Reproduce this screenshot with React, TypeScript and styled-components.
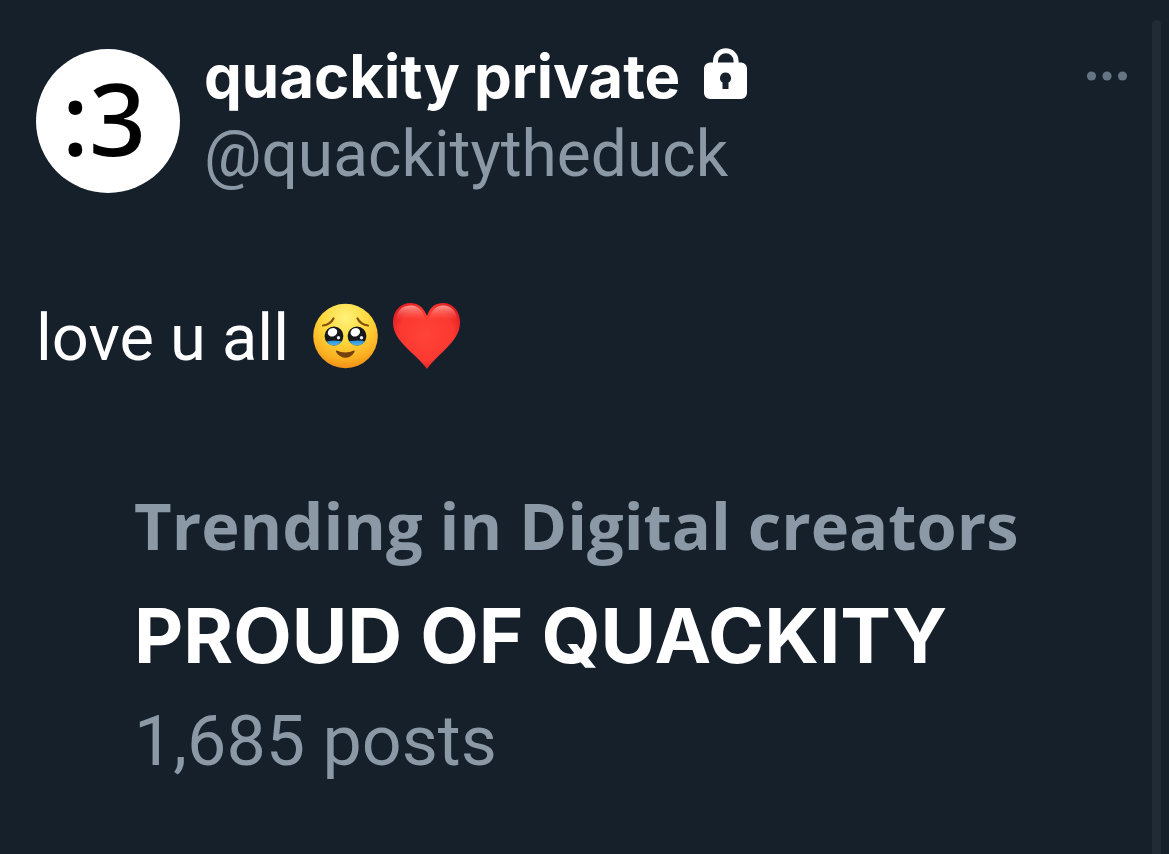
import React from "react";
import styled, { createGlobalStyle } from "styled-components";

const GlobalStyle = createGlobalStyle`
  *, *::before, *::after { box-sizing: border-box; }
  html, body { margin: 0; background: #16202a; }
`;

const Page = styled.main`
  display: flex;
  min-height: 100vh;
  background: #16202a;
  color: #ffffff;
  font-family: Roboto, "Liberation Sans", sans-serif;
`;

const Post = styled.article`
  flex: 1;
  min-width: 0;
  padding: 37px 23px 40px 36px;
`;

const ScrollGutter = styled.aside`
  display: flex;
  width: 17px;
  padding: 20px 8px 0 0;
`;

const ScrollThumb = styled.div`
  flex: 1;
  border-radius: 5px 5px 0 0;
  background: #212b35;
`;

const Header = styled.header`
  display: flex;
  align-items: flex-start;
  gap: 24px;
`;

const Avatar = styled.div`
  flex: none;
  width: 144px;
  height: 144px;
  margin-top: 12px;
  padding-right: 8px;
  border-radius: 50%;
  background: #ffffff;
  color: #000000;
  font: 500 100px/136px "Noto Sans", "Open Sans", sans-serif;
  text-align: center;
`;

const Author = styled.div`
  flex: 1;
  min-width: 0;
`;

const NameRow = styled.div`
  display: flex;
  align-items: center;
  gap: 24px;
`;

const Name = styled.h1`
  margin: 0;
  font: 700 60px/78px Inter, sans-serif;
  white-space: nowrap;
`;

const LockIcon = styled.svg`
  flex: none;
  width: 44px;
  height: 52px;
  margin-bottom: 4px;
`;

const Handle = styled.a`
  display: block;
  color: #8b98a5;
  font-size: 64px;
  line-height: 80px;
  text-decoration: none;
  white-space: nowrap;
`;

const MoreButton = styled.button`
  display: flex;
  align-items: center;
  height: 78px;
  padding: 0;
  border: 0;
  background: none;
  color: #657482;
  cursor: pointer;
`;

const Message = styled.div`
  display: flex;
  align-items: flex-start;
  margin-top: 101px;
`;

const MessageText = styled.p`
  margin: 0 24px 0 0;
  font-size: 65px;
  line-height: 84px;
`;

const Emojis = styled.div`
  display: flex;
  gap: 14px;
  padding-top: 7px;
`;

const Trend = styled.section`
  padding: 90px 0 0 98px;
`;

const TrendTopic = styled.p`
  margin: 0;
  color: #8b98a5;
  font: 700 65px/110px "Open Sans", "Noto Sans", sans-serif;
`;

const TrendTitle = styled.h2`
  margin: 0;
  font: 700 76px/110px Inter, sans-serif;
`;

const TrendCount = styled.p`
  margin: 0;
  color: #8b98a5;
  font-size: 70px;
  line-height: 102px;
`;

function Lock() {
  return (
    <LockIcon viewBox="0 0 44 52" role="img" aria-label="Protected account">
      <path d="M11.5 18v-5a10.300 10.300 0 0 1 20.600 0v5" fill="none" stroke="#fff" strokeWidth="5" />
      <path
        fill="#fff"
        fillRule="evenodd"
        d="M6 14.500h31a6 6 0 0 1 6 6V45a6 6 0 0 1-6 6H6a6 6 0 0 1-6-6V20.500a6 6 0 0 1 6-6zM21.500 24.500a5.500 5.500 0 0 0-3 10.100V41h6v-6.400a5.500 5.500 0 0 0-3-10.100z"
      />
    </LockIcon>
  );
}

function TearyFace() {
  return (
    <svg width="66" height="66" viewBox="0 0 66 66" role="img" aria-label="Face holding back tears">
      <defs>
        <radialGradient id="skin" cx="50%" cy="22%" r="80%">
          <stop offset="0" stopColor="#fff27a" />
          <stop offset=".45" stopColor="#ffd83c" />
          <stop offset=".8" stopColor="#fbb021" />
          <stop offset="1" stopColor="#ee8b16" />
        </radialGradient>
        <linearGradient id="tears" x1="0" y1="0" x2="0" y2="1">
          <stop offset="0" stopColor="#2a91d8" />
          <stop offset="1" stopColor="#6ccdf5" />
        </linearGradient>
        <clipPath id="eyes">
          <circle cx="21" cy="33" r="9.400" />
          <circle cx="44" cy="33" r="9.400" />
        </clipPath>
      </defs>
      <circle cx="32.500" cy="33" r="32.300" fill="url(#skin)" />
      <g clipPath="url(#eyes)">
        <path d="M10 22h46v22H10z" fill="#15171b" />
        <path d="M10 39.500q11-4 22.500 0q11.500-4 23.500 0v6H10z" fill="url(#tears)" />
      </g>
      <ellipse cx="19.500" cy="29.300" rx="4.900" ry="4.100" fill="#fff" transform="rotate(-25 19.500 29.300)" />
      <ellipse cx="42.300" cy="29.300" rx="4.900" ry="4.100" fill="#fff" transform="rotate(-25 42.300 29.300)" />
      <circle cx="25.500" cy="34.800" r="1.700" fill="#e4eef5" />
      <circle cx="48.500" cy="34.800" r="1.700" fill="#e4eef5" />
      <g fill="none" stroke="#87500c" strokeWidth="2.200" strokeLinecap="round">
        <path d="M10 22.500Q17.500 21.500 20.500 15.500" />
        <path d="M44.500 15.500Q47.500 21.500 55 22.500" />
      </g>
      <path d="M23.500 47.500Q32.500 51.500 41 47.500Q42 47.300 41.500 49Q38 54.800 32.500 54.800T23 49Q22.600 47.300 23.500 47.500z" fill="#754009" />
    </svg>
  );
}

function Heart() {
  return (
    <svg width="68" height="66" viewBox="0 0 68 66" role="img" aria-label="Red heart">
      <defs>
        <radialGradient id="heart" cx="50%" cy="48%" r="62%">
          <stop offset="0" stopColor="#ff4438" />
          <stop offset=".65" stopColor="#fb3831" />
          <stop offset="1" stopColor="#d9151e" />
        </radialGradient>
        <linearGradient id="shine" x1="0" y1="0" x2="0" y2="1">
          <stop offset="0" stopColor="#ffb0a8" stopOpacity=".85" />
          <stop offset="1" stopColor="#ff5147" stopOpacity="0" />
        </linearGradient>
      </defs>
      <path d="M34 13C30 3 24 0 17.500 0C7 0 0 8 0 19.500C0 39 23 50 34 66C45 50 67 39 67 19.500C67 8 60 0 50 0C43 0 37.500 3 34 13z" fill="url(#heart)" />
      <path d="M33 17C29 6 24 2.500 18 2.500C9 2.500 3 8 3 18Q16 12 33 17zM35 17C39 6 44 2.500 50 2.500C58 2.500 64 8 64 18Q51 12 35 17z" fill="url(#shine)" />
    </svg>
  );
}

export default function App() {
  return (
    <>
      <GlobalStyle />
      <Page>
        <Post>
          <Header>
            <Avatar>:3</Avatar>
            <Author>
              <NameRow>
                <Name>quackity private</Name>
                <Lock />
              </NameRow>
              <Handle href="#profile">@quackitytheduck</Handle>
            </Author>
            <MoreButton type="button" aria-label="More">
              <svg width="44" height="12" viewBox="0 0 44 12" fill="currentColor">
                <circle cx="6.500" cy="6" r="4.600" />
                <circle cx="22" cy="6" r="4.600" />
                <circle cx="37.500" cy="6" r="4.600" />
              </svg>
            </MoreButton>
          </Header>
          <Message>
            <MessageText>love u all</MessageText>
            <Emojis>
              <TearyFace />
              <Heart />
            </Emojis>
          </Message>
          <Trend>
            <TrendTopic>Trending in Digital creators</TrendTopic>
            <TrendTitle>PROUD OF QUACKITY</TrendTitle>
            <TrendCount>1,685 posts</TrendCount>
          </Trend>
        </Post>
        <ScrollGutter aria-hidden="true">
          <ScrollThumb />
        </ScrollGutter>
      </Page>
    </>
  );
}
